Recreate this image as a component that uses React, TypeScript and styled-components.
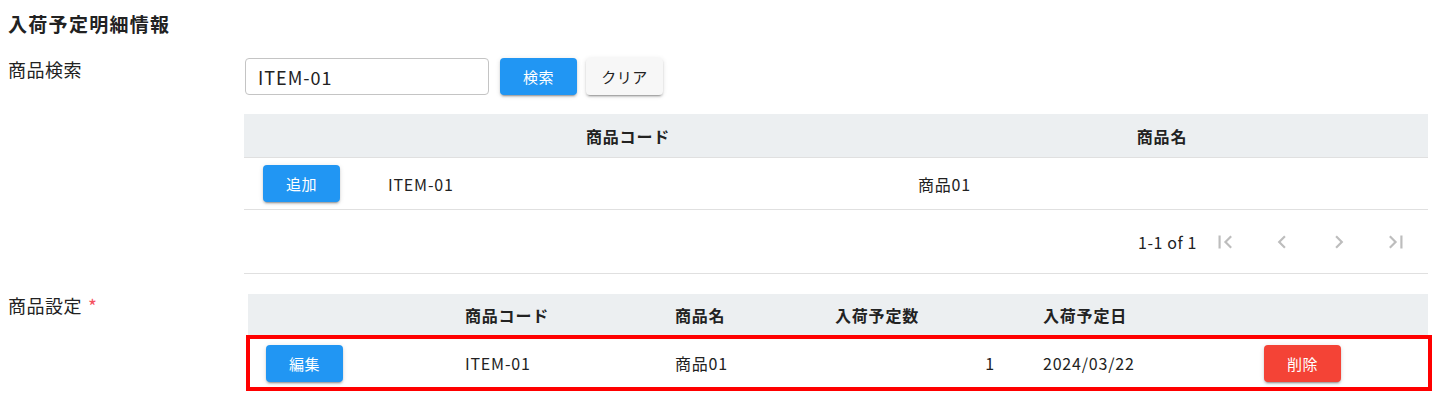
import React from "react";
import styled, { createGlobalStyle, css } from "styled-components";

const GlobalStyle = createGlobalStyle`
  html, body { background: #ffffff; }
  body {
    margin: 8px;
    font-family: "Noto Sans CJK JP", "Noto Sans", sans-serif;
    color: rgba(0, 0, 0, 0.87);
  }
  * { box-sizing: border-box; }
`;

const Page = styled.div`
  display: flex;
  flex-direction: column;
`;

const Title = styled.h2`
  margin: 0 0 18px 0;
  font-size: 19px;
  line-height: 32px;
  font-weight: 700;
  letter-spacing: 1.3px;
  color: #222;
`;

const Section = styled.section<{ $gapTop?: number }>`
  display: grid;
  grid-template-columns: 236px 1184px;
  margin-top: ${(p) => p.$gapTop ?? 0}px;
`;

const Label = styled.div`
  font-size: 18px;
  line-height: 22px;
  letter-spacing: 0.5px;
  color: #222;
`;

const Required = styled.span`
  color: #f5515f;
  font-size: 19px;
  line-height: 24px;
  margin-left: 6px;
  vertical-align: top;
`;

const Content = styled.div`
  display: flex;
  flex-direction: column;
`;

const SearchBar = styled.div`
  display: flex;
  align-items: center;
  margin-left: 1px;
  margin-bottom: 19px;
`;

const TextInput = styled.input`
  width: 244px;
  height: 37px;
  border: 1px solid #c4c4c4;
  border-radius: 4px;
  padding: 0 12px;
  font-family: inherit;
  font-size: 18px;
  letter-spacing: 1px;
  color: #222;
  outline: none;
  margin-right: 11px;
`;

const variants = {
  primary: css`
    background: #2196f3;
    color: #ffffff;
  `,
  danger: css`
    background: #f44336;
    color: #ffffff;
  `,
  neutral: css`
    background: #f7f7f7;
    color: #222;
  `,
};

const Button = styled.button<{ $variant: keyof typeof variants }>`
  width: 77px;
  height: 37px;
  border: none;
  border-radius: 4px;
  font-family: inherit;
  font-size: 15px;
  letter-spacing: 0.5px;
  cursor: pointer;
  box-shadow: 0px 3px 1px -2px rgba(0, 0, 0, 0.2), 0px 2px 2px 0px rgba(0, 0, 0, 0.14),
    0px 1px 5px 0px rgba(0, 0, 0, 0.12);
  flex-shrink: 0;
  ${(p) => variants[p.$variant]}
`;

const ButtonGap = styled.div`
  width: 9px;
`;

const Table = styled.div<{ $offset?: number }>`
  display: flex;
  flex-direction: column;
  margin-left: ${(p) => p.$offset ?? 0}px;
  font-size: 16px;
  letter-spacing: 0.8px;
  color: #222;
`;

const HeadRow = styled.div<{ $cols: string; $height: number; $line?: boolean }>`
  display: grid;
  grid-template-columns: ${(p) => p.$cols};
  align-items: center;
  height: ${(p) => p.$height}px;
  background: #eceff1;
  border-bottom: ${(p) => (p.$line ? "1px solid #e0e0e0" : "none")};
  font-weight: 700;
`;

const BodyRow = styled.div<{ $cols: string; $height: number; $line?: boolean; $selected?: boolean }>`
  position: relative;
  display: grid;
  grid-template-columns: ${(p) => p.$cols};
  align-items: center;
  height: ${(p) => p.$height}px;
  border-bottom: ${(p) => (p.$line ? "1px solid #e0e0e0" : "none")};
  ${(p) =>
    p.$selected &&
    css`
      &::after {
        content: "";
        position: absolute;
        top: 0;
        bottom: 0;
        left: -2px;
        right: -4px;
        border: 4px solid #ff0000;
        pointer-events: none;
      }
    `}
`;

const Cell = styled.div<{ $align?: "left" | "center" | "right"; $pl?: number; $pr?: number }>`
  text-align: ${(p) => p.$align ?? "left"};
  padding-left: ${(p) => p.$pl ?? 16}px;
  padding-right: ${(p) => p.$pr ?? 16}px;
  white-space: nowrap;
`;

const Pagination = styled.div`
  display: flex;
  align-items: center;
  justify-content: flex-end;
  height: 64px;
  border-bottom: 1px solid #e0e0e0;
  padding-right: 12px;
`;

const PageInfo = styled.span`
  font-size: 16px;
  letter-spacing: 0.6px;
  color: #222;
  margin-right: 8px;
`;

const PageActions = styled.div`
  display: flex;
  gap: 17px;
`;

const IconButton = styled.button`
  width: 40px;
  height: 40px;
  border: none;
  background: transparent;
  padding: 0;
  display: flex;
  align-items: center;
  justify-content: center;
  color: #bdbdbd;
`;

const Icon = ({ d }: { d: string }) => (
  <svg width="26" height="26" viewBox="0 0 24 24" fill="currentColor" aria-hidden="true">
    <path d={d} />
  </svg>
);

const ICONS = {
  first: "M18.41 16.59L13.82 12l4.59-4.59L17 6l-6 6 6 6zM6 6h2v12H6z",
  prev: "M15.41 16.59L10.83 12l4.58-4.59L14 6l-6 6 6 6 1.41-1.41z",
  next: "M8.59 16.59L13.17 12 8.59 7.41 10 6l6 6-6 6-1.41-1.41z",
  last: "M5.59 7.41L10.18 12l-4.59 4.59L7 18l6-6-6-6zM16 6h2v12h-2z",
};

const SEARCH_COLS = "128px 530px 1fr";
const ITEM_COLS = "201px 210px 160px 208px 221px 1fr";

export default function App() {
  return (
    <>
      <GlobalStyle />
      <Page>
        <Title>入荷予定明細情報</Title>

        <Section>
          <Label>商品検索</Label>
          <Content>
            <SearchBar>
              <TextInput defaultValue="ITEM-01" />
              <Button $variant="primary">検索</Button>
              <ButtonGap />
              <Button $variant="neutral">クリア</Button>
            </SearchBar>
            <Table>
              <HeadRow $cols={SEARCH_COLS} $height={44} $line>
                <Cell />
                <Cell $align="center" $pr={34}>商品コード</Cell>
                <Cell $align="center" $pr={22}>商品名</Cell>
              </HeadRow>
              <BodyRow $cols={SEARCH_COLS} $height={52} $line>
                <Cell $pl={19}>
                  <Button $variant="primary">追加</Button>
                </Cell>
                <Cell>ITEM-01</Cell>
                <Cell>商品01</Cell>
              </BodyRow>
              <Pagination>
                <PageInfo>1-1 of 1</PageInfo>
                <PageActions>
                  <IconButton aria-label="first page"><Icon d={ICONS.first} /></IconButton>
                  <IconButton aria-label="previous page"><Icon d={ICONS.prev} /></IconButton>
                  <IconButton aria-label="next page"><Icon d={ICONS.next} /></IconButton>
                  <IconButton aria-label="last page"><Icon d={ICONS.last} /></IconButton>
                </PageActions>
              </Pagination>
            </Table>
          </Content>
        </Section>

        <Section $gapTop={20}>
          <Label>
            商品設定<Required>*</Required>
          </Label>
          <Content>
            <Table $offset={4}>
              <HeadRow $cols={ITEM_COLS} $height={41}>
                <Cell />
                <Cell>商品コード</Cell>
                <Cell>商品名</Cell>
                <Cell>入荷予定数</Cell>
                <Cell>入荷予定日</Cell>
                <Cell />
              </HeadRow>
              <BodyRow $cols={ITEM_COLS} $height={56} $selected>
                <Cell $pl={18}>
                  <Button $variant="primary">編集</Button>
                </Cell>
                <Cell>ITEM-01</Cell>
                <Cell>商品01</Cell>
                <Cell $align="right" $pr={32}>1</Cell>
                <Cell>2024/03/22</Cell>
                <Cell>
                  <Button $variant="danger">削除</Button>
                </Cell>
              </BodyRow>
            </Table>
          </Content>
        </Section>
      </Page>
    </>
  );
}
